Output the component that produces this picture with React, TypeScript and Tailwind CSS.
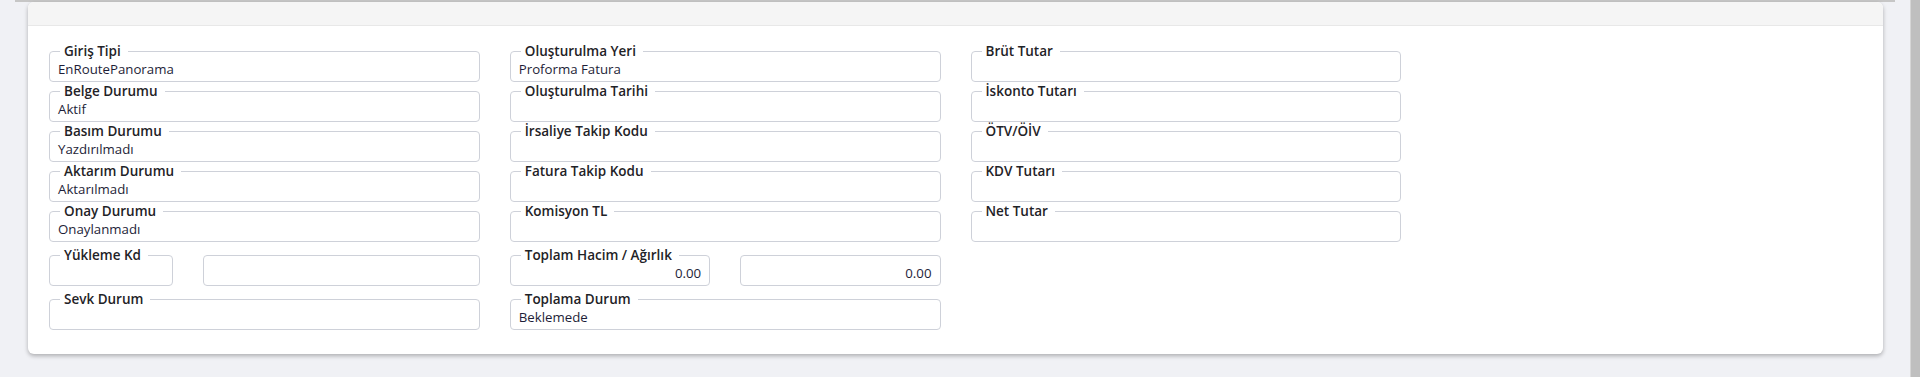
import React from "react";

type FieldProps = { label?: string; value?: string; right?: boolean };

function Field({ label, value, right }: FieldProps) {
  return (
    <div className="relative h-[31px] rounded-[4px] border border-[#ced1d9] bg-white">
      {label && (
        <span className="absolute left-[10px] -top-[9px] bg-white pl-[4px] pr-[7px] text-[13.5px] font-semibold leading-[16px] text-[#1f2327] whitespace-nowrap">
          {label}
        </span>
      )}
      <div
        className={
          "px-[8px] pt-[9px] text-[13.25px] leading-[16px] text-[#1e1e38] whitespace-nowrap " +
          (right ? "text-right" : "text-left")
        }
      >
        {value ?? "\u00a0"}
      </div>
    </div>
  );
}

export default function App() {
  return (
    <div
      className="flex h-[377px] w-full overflow-hidden bg-[#f0f1f5]"
      style={{ fontFamily: '"Open Sans", "Noto Sans", sans-serif' }}
    >
      <div className="flex-1">
        <div className="ml-[15px] h-[2px] w-[1880px] bg-[#c6c6c6]" />
        <div className="ml-[28px] w-[1855px] overflow-hidden rounded-[6px] bg-white shadow-[0_2px_4px_rgba(0,0,0,0.28)]">
          <div className="h-[24px] border-b border-[#e8e8e8] bg-[#f5f5f5]" />
          <div className="grid grid-cols-4 gap-x-[30px] px-[21px] pt-[25px] pb-[24px]">
            <div className="flex flex-col gap-[9px]">
              <Field label="Giriş Tipi" value="EnRoutePanorama" />
              <Field label="Belge Durumu" value="Aktif" />
              <Field label="Basım Durumu" value="Yazdırılmadı" />
              <Field label="Aktarım Durumu" value="Aktarılmadı" />
              <Field label="Onay Durumu" value="Onaylanmadı" />
              <div className="mt-[4px] grid grid-cols-[123.5px_1fr] gap-x-[30px]">
                <Field label="Yükleme Kd" />
                <Field />
              </div>
              <div className="mt-[4px]">
                <Field label="Sevk Durum" />
              </div>
            </div>
            <div className="flex flex-col gap-[9px]">
              <Field label="Oluşturulma Yeri" value="Proforma Fatura" />
              <Field label="Oluşturulma Tarihi" />
              <Field label="İrsaliye Takip Kodu" />
              <Field label="Fatura Takip Kodu" />
              <Field label="Komisyon TL" />
              <div className="mt-[4px] grid grid-cols-2 gap-x-[30px]">
                <Field label="Toplam Hacim / Ağırlık" value="0.00" right />
                <Field value="0.00" right />
              </div>
              <div className="mt-[4px]">
                <Field label="Toplama Durum" value="Beklemede" />
              </div>
            </div>
            <div className="flex flex-col gap-[9px]">
              <Field label="Brüt Tutar" />
              <Field label="İskonto Tutarı" />
              <Field label="ÖTV/ÖİV" />
              <Field label="KDV Tutarı" />
              <Field label="Net Tutar" />
            </div>
            <div />
          </div>
        </div>
      </div>
      <div className="h-full w-[10px] border-l border-[#d6d6d6] bg-[#bfbfbf]" />
    </div>
  );
}
